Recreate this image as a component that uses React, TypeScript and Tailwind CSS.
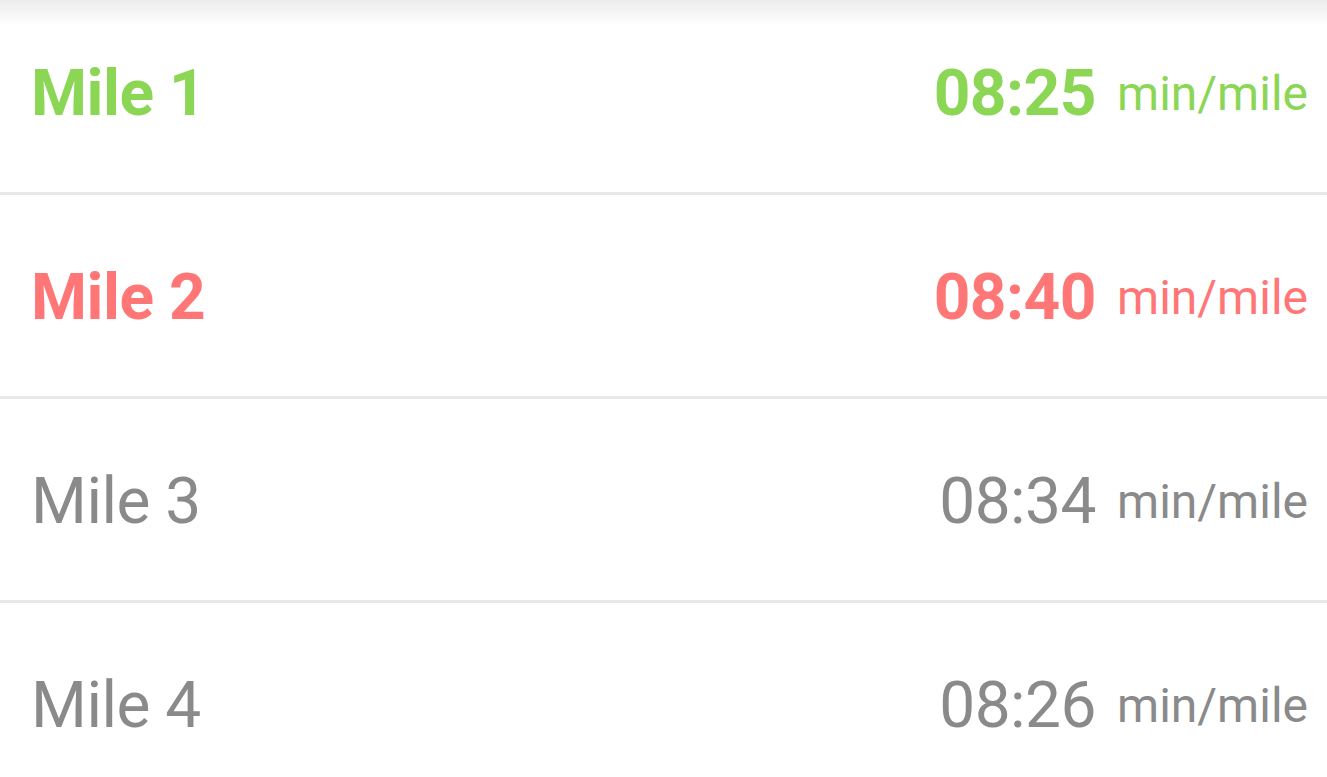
const splits = [
  { mile: 1, pace: "08:25", tone: "good" },
  { mile: 2, pace: "08:40", tone: "bad" },
  { mile: 3, pace: "08:34", tone: "plain" },
  { mile: 4, pace: "08:26", tone: "plain" },
];

const toneClass: Record<string, string> = {
  good: "text-[#8cd656] font-bold",
  bad: "text-[#ff7676] font-bold",
  plain: "text-[#8a8a8a] font-normal",
};

const unitClass: Record<string, string> = {
  good: "text-[#8cd656]",
  bad: "text-[#ff7676]",
  plain: "text-[#8a8a8a]",
};

export default function App() {
  return (
    <div className="relative h-[777px] w-full overflow-hidden bg-white font-['Roboto',sans-serif]">
      <div className="pointer-events-none absolute inset-x-0 top-0 h-[26px] bg-gradient-to-b from-[#ececec] to-white/0" />
      <ul className="-mt-[9px]">
        {splits.map((s) => (
          <li
            key={s.mile}
            className="flex h-[204px] items-center justify-between border-b-[3px] border-[#e8e8e8] pl-[31px] pr-[19px] pt-[5px]"
          >
            <span className={`text-[64px] leading-none tracking-[-0.5px] ${toneClass[s.tone]}`}>
              Mile {s.mile}
            </span>
            <span className="flex items-center gap-[21px]">
              <span className={`text-[64px] leading-none tracking-[-0.5px] ${toneClass[s.tone]}`}>
                {s.pace}
              </span>
              <span className={`text-[48px] leading-none ${unitClass[s.tone]}`}>min/mile</span>
            </span>
          </li>
        ))}
      </ul>
    </div>
  );
}
